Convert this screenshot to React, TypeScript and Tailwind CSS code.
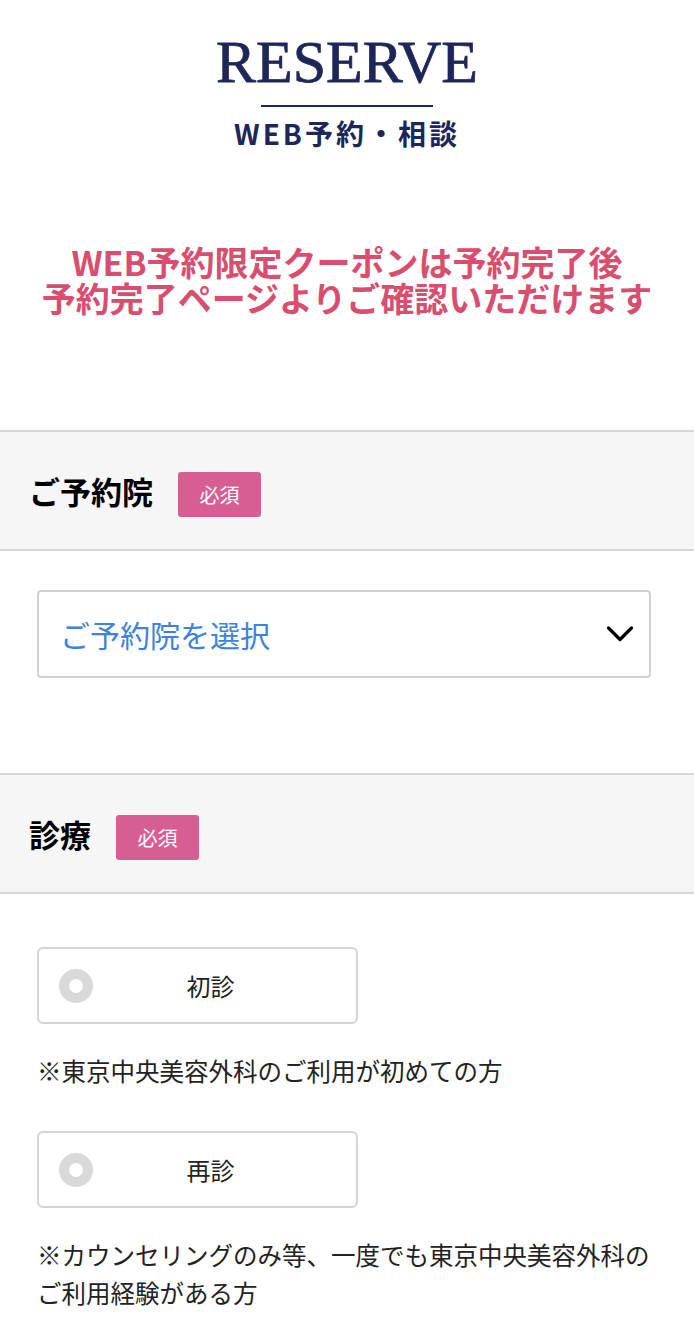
import React from "react";

const jp = { fontFamily: '"Noto Sans CJK JP", "Noto Sans", sans-serif' };

function Badge() {
  return (
    <span className="mt-[8px] inline-flex h-[45px] w-[83px] items-center justify-center rounded-[3px] bg-[#d75e93] text-[20px] leading-none text-white">
      必須
    </span>
  );
}

function SectionHeader({ title }: { title: string }) {
  return (
    <div className="flex h-[121px] items-center gap-[25px] border-y-2 border-[#d6d6d6] bg-[#f6f6f6] pl-[29px]">
      <span className="text-[31px] font-bold leading-none text-black">{title}</span>
      <Badge />
    </div>
  );
}

function Radio({ label }: { label: string }) {
  return (
    <div className="relative flex h-[77px] w-[321px] items-center rounded-[6px] border-2 border-[#d4d4d4] bg-white">
      <span className="ml-[20px] flex h-[34px] w-[34px] items-center justify-center rounded-full bg-[#d9d9d9]">
        <span className="h-[14px] w-[14px] rounded-full bg-white" />
      </span>
      <span className="absolute left-0 right-0 pl-[26px] text-center text-[24px] leading-none text-[#222]">{label}</span>
    </div>
  );
}

export default function App() {
  return (
    <div className="min-h-[1342px] w-[694px] bg-white" style={jp}>
      <div className="flex flex-col items-center pt-[32px]">
        <div
          className="text-[60px] leading-none text-[#1d2659] [-webkit-text-stroke:0.8px_#1d2659]"
          style={{ fontFamily: '"Liberation Serif", "Times New Roman", serif' }}
        >
          RESERVE
        </div>
        <div className="mt-[13px] h-[2px] w-[172px] bg-[#1d2659]" />
        <div className="mt-[12px] text-[28px] font-bold leading-none tracking-[3px] text-[#1d2659]">
          WEB予約・相談
        </div>
      </div>

      <div className="mt-[97px] text-center text-[34px] font-bold leading-[36px] text-[#d94d6e]">
        <div>WEB予約限定クーポンは予約完了後</div>
        <div>予約完了ページよりご確認いただけます</div>
      </div>

      <div className="mt-[114px]">
        <SectionHeader title="ご予約院" />
      </div>

      <div className="pl-[37px] pr-[43px] pt-[39px]">
        <div className="flex h-[88px] items-center justify-between rounded-[4px] border-2 border-[#d0d0d0] bg-white pl-[21px] pr-[14px]">
          <span className="text-[30px] leading-none text-[#3d82dc]">ご予約院を選択</span>
          <svg width="30" height="18" viewBox="0 0 30 18" fill="none">
            <path d="M3.5 3 L15 14.5 L26.5 3" stroke="#000" strokeWidth="3.2" strokeLinecap="round" strokeLinejoin="round" />
          </svg>
        </div>
      </div>

      <div className="mt-[95px]">
        <SectionHeader title="診療" />
      </div>

      <div className="px-[37px] pt-[53px]">
        <Radio label="初診" />
        <p className="mt-[28px] text-[24.5px] leading-[38px] text-[#222]">※東京中央美容外科のご利用が初めての方</p>
        <div className="mt-[41px]">
          <Radio label="再診" />
        </div>
        <p className="mt-[28px] text-[24.5px] leading-[38px] text-[#222]">
          ※カウンセリングのみ等、一度でも東京中央美容外科の
          <br />
          ご利用経験がある方
        </p>
      </div>
    </div>
  );
}
